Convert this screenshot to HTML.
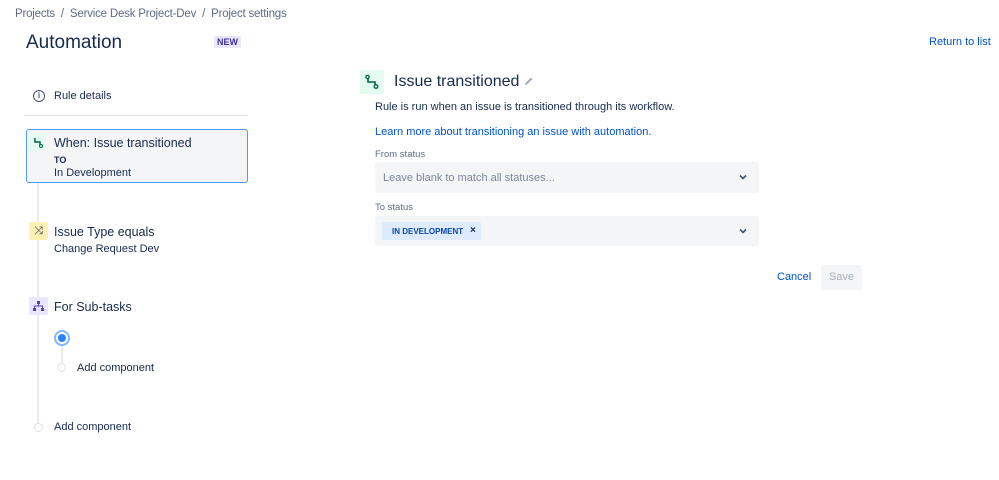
<!DOCTYPE html>
<html><head><style>
*{margin:0;padding:0;box-sizing:border-box}
body{width:999px;height:480px;background:#fff;font-family:"Liberation Sans",sans-serif;color:#172b4d;position:relative;overflow:hidden}
.a{position:absolute;white-space:nowrap}
</style></head><body>
<div class="a" style="left:15px;top:8px;font-size:11.5px;color:#5e6c84;letter-spacing:-0.2px">Projects &nbsp;/&nbsp; Service Desk Project-Dev &nbsp;/&nbsp; Project settings</div>
<div class="a" style="left:26px;top:32px;font-size:19px;color:#172b4d">Automation</div>
<div class="a" style="left:214px;top:36px;font-size:9px;font-weight:bold;color:#403294;background:#eae6ff;padding:1px 3px;border-radius:2px">NEW</div>
<div class="a" style="left:929px;top:36px;font-size:11px;color:#0052cc">Return to list</div>

<div class="a" style="left:33px;top:90px;width:12px;height:12px;border:1.3px solid #42526e;border-radius:50%;font-size:8px;text-align:center;line-height:10px;color:#42526e;font-weight:bold">i</div>
<div class="a" style="left:54px;top:90px;font-size:11px">Rule details</div>
<div class="a" style="left:25px;top:115px;width:223px;height:1px;background:#dfe1e6"></div>

<div class="a" style="left:37px;top:140px;width:2px;height:287px;background:#ebecf0"></div>
<div class="a" style="left:26px;top:129px;width:222px;height:54px;background:#f4f5f7;border:1.5px solid #4c9aff;border-radius:3px"></div>
<div class="a" style="left:30px;top:134px;width:16px;height:17px;background:#e3fcef"></div>
<svg class="a" style="left:31px;top:135px" width="14" height="14" viewBox="0 0 14 14"><path d="M4 3 V7 H9 V10" fill="none" stroke="#006644" stroke-width="1.5"/><circle cx="10" cy="11" r="1.5" fill="#e3fcef" stroke="#006644"/></svg>
<div class="a" style="left:54px;top:136px;font-size:12.5px">When: Issue transitioned</div>
<div class="a" style="left:54px;top:155px;font-size:9px;font-weight:bold">TO</div>
<div class="a" style="left:54px;top:167px;font-size:11px">In Development</div>

<div class="a" style="left:29px;top:222px;width:19px;height:18px;background:#fff0b3;border-radius:2px;font-size:11px;text-align:center;line-height:18px;color:#172b4d">⤨</div>
<div class="a" style="left:54px;top:225px;font-size:12.5px">Issue Type equals</div>
<div class="a" style="left:54px;top:243px;font-size:11px">Change Request Dev</div>

<div class="a" style="left:29px;top:297px;width:19px;height:18px;background:#eae6ff;border-radius:2px"></div>
<svg class="a" style="left:32px;top:300px" width="13" height="12" viewBox="0 0 13 12"><rect x="5" y="1" width="3" height="3" fill="#5243aa"/><rect x="1" y="8" width="3" height="3" fill="#5243aa"/><rect x="9" y="8" width="3" height="3" fill="#5243aa"/><path d="M6.5 4V6M2.5 8V6H10.5V8" stroke="#5243aa" fill="none"/></svg>
<div class="a" style="left:54px;top:300px;font-size:12.5px">For Sub-tasks</div>
<div class="a" style="left:61px;top:345px;width:2px;height:22px;background:#ebecf0"></div>
<div class="a" style="left:54px;top:330px;width:16px;height:16px;border:2px solid #85b8ff;border-radius:50%;background:#fff"></div>
<div class="a" style="left:58px;top:334px;width:8px;height:8px;border-radius:50%;background:#2684ff"></div>
<div class="a" style="left:57px;top:363px;width:9px;height:9px;border:1.5px solid #dfe1e6;border-radius:50%;background:#fff"></div>
<div class="a" style="left:77px;top:362px;font-size:11px">Add component</div>
<div class="a" style="left:34px;top:423px;width:9px;height:9px;border:1.5px solid #dfe1e6;border-radius:50%;background:#fff"></div>
<div class="a" style="left:54px;top:421px;font-size:11px">Add component</div>

<div class="a" style="left:360px;top:70px;width:24px;height:24px;background:#e3fcef;border-radius:2px"></div>
<svg class="a" style="left:364px;top:74px" width="16" height="16" viewBox="0 0 16 16"><circle cx="3.5" cy="3" r="1.6" fill="#e3fcef" stroke="#006644" stroke-width="1.3"/><path d="M4 4.5 V8 H11 V11" fill="none" stroke="#006644" stroke-width="1.6"/><circle cx="12" cy="12.5" r="1.8" fill="#e3fcef" stroke="#006644" stroke-width="1.3"/></svg>
<div class="a" style="left:394px;top:73px;font-size:16px;color:#172b4d">Issue transitioned</div>
<svg class="a" style="left:523px;top:76px" width="11" height="11" viewBox="0 0 11 11"><path d="M2 9 L2.5 7 L8 1.5 L9.5 3 L4 8.5Z" fill="#a5adba"/></svg>
<div class="a" style="left:375px;top:101px;font-size:11px">Rule is run when an issue is transitioned through its workflow.</div>
<div class="a" style="left:375px;top:126px;font-size:11px;color:#0052cc">Learn more about transitioning an issue with automation.</div>
<div class="a" style="left:375px;top:149px;font-size:9.5px;color:#5e6c84">From status</div>
<div class="a" style="left:375px;top:162px;width:384px;height:31px;background:#f4f5f7;border-radius:3px"></div>
<div class="a" style="left:383px;top:172px;font-size:11px;color:#7a869a">Leave blank to match all statuses...</div>
<div class="a" style="left:375px;top:202px;font-size:9.5px;color:#5e6c84">To status</div>
<div class="a" style="left:375px;top:216px;width:384px;height:30px;background:#f4f5f7;border-radius:3px"></div>
<div class="a" style="left:382px;top:222px;width:99px;height:18px;background:#deebff;border-radius:2px"></div>
<div class="a" style="left:392px;top:227px;font-size:8px;font-weight:bold;color:#0747a6">IN DEVELOPMENT</div>
<div class="a" style="left:470px;top:225px;font-size:10px;font-weight:bold;color:#172b4d">×</div>
<svg class="a" style="left:739px;top:174px" width="8" height="6" viewBox="0 0 8 6"><path d="M1 1.5 L4 4.5 L7 1.5" fill="none" stroke="#42526e" stroke-width="1.6"/></svg>
<svg class="a" style="left:739px;top:228px" width="8" height="6" viewBox="0 0 8 6"><path d="M1 1.5 L4 4.5 L7 1.5" fill="none" stroke="#42526e" stroke-width="1.6"/></svg>
<div class="a" style="left:777px;top:271px;font-size:11px;color:#0052cc">Cancel</div>
<div class="a" style="left:821px;top:265px;width:41px;height:25px;background:#f4f5f7;border-radius:3px;font-size:11px;color:#a5adba;text-align:center;line-height:25px">Save</div>
</body></html>
